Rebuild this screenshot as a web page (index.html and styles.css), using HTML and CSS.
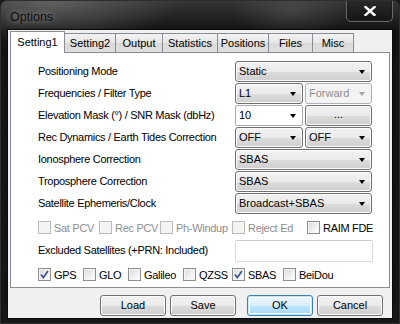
FILE: index.html
```html
<!DOCTYPE html>
<html lang="en">
<head>
  <meta charset="UTF-8" />
  <title>Options</title>
  <link rel="stylesheet" href="styles.css">
</head>
<body>
  <div class="window">
    <div class="titlebar">
      <span class="title">Options</span>
      <div class="close-btn">
        <svg width="12" height="10" viewBox="0 0 12 10"><path d="M1.5 1 L10.5 9 M10.5 1 L1.5 9" stroke="#fff" stroke-width="2.4" stroke-linecap="square"/></svg>
      </div>
    </div>
    <div class="client">
      <div class="tabs">
        <div class="tab active t-set1">Setting1</div>
        <div class="tab t-set2">Setting2</div>
        <div class="tab t-out">Output</div>
        <div class="tab t-stat">Statistics</div>
        <div class="tab t-pos">Positions</div>
        <div class="tab t-files">Files</div>
        <div class="tab t-misc">Misc</div>
      </div>
      <div class="panel">
        <div class="row">
          <span class="label">Positioning Mode</span>
          <div class="combo">Static<i class="arrow"></i></div>
        </div>
        <div class="row">
          <span class="label">Frequencies / Filter Type</span>
          <div class="pair">
            <div class="combo">L1<i class="arrow"></i></div>
            <div class="combo disabled">Forward<i class="arrow"></i></div>
          </div>
        </div>
        <div class="row">
          <span class="label">Elevation Mask (°) / SNR Mask (dbHz)</span>
          <div class="pair">
            <div class="combo edit">10<i class="arrow"></i></div>
            <div class="btn dots">...</div>
          </div>
        </div>
        <div class="row">
          <span class="label">Rec Dynamics / Earth Tides Correction</span>
          <div class="pair">
            <div class="combo">OFF<i class="arrow"></i></div>
            <div class="combo">OFF<i class="arrow"></i></div>
          </div>
        </div>
        <div class="row">
          <span class="label">Ionosphere Correction</span>
          <div class="combo">SBAS<i class="arrow"></i></div>
        </div>
        <div class="row">
          <span class="label">Troposphere Correction</span>
          <div class="combo">SBAS<i class="arrow"></i></div>
        </div>
        <div class="row">
          <span class="label">Satellite Ephemeris/Clock</span>
          <div class="combo">Broadcast+SBAS<i class="arrow"></i></div>
        </div>

        <div class="checks checks-opt">
          <label class="check disabled"><span class="box"></span>Sat PCV</label>
          <label class="check disabled"><span class="box"></span>Rec PCV</label>
          <label class="check disabled"><span class="box"></span>Ph-Windup</label>
          <label class="check disabled"><span class="box"></span>Reject Ed</label>
          <label class="check"><span class="box"></span>RAIM FDE</label>
        </div>

        <div class="row excl">
          <span class="label">Excluded Satellites (+PRN: Included)</span>
          <div class="textbox"></div>
        </div>

        <div class="checks checks-sys">
          <label class="check"><span class="box checked"><svg width="9" height="9" viewBox="0 0 9 9"><path d="M1 4.5 L3.3 7.5 L8 1" stroke="#3d5587" stroke-width="1.7" fill="none"/></svg></span>GPS</label>
          <label class="check"><span class="box"></span>GLO</label>
          <label class="check"><span class="box"></span>Galileo</label>
          <label class="check"><span class="box"></span>QZSS</label>
          <label class="check"><span class="box checked"><svg width="9" height="9" viewBox="0 0 9 9"><path d="M1 4.5 L3.3 7.5 L8 1" stroke="#3d5587" stroke-width="1.7" fill="none"/></svg></span>SBAS</label>
          <label class="check"><span class="box"></span>BeiDou</label>
        </div>
      </div>
      <div class="buttons">
        <div class="btn b-load">Load</div>
        <div class="btn b-save">Save</div>
        <div class="btn default b-ok">OK</div>
        <div class="btn b-cancel">Cancel</div>
      </div>
    </div>
  </div>
</body>
</html>
```

FILE: styles.css
```css
body {
  margin: 0;
  background: #1b1b1b;
  font-family: 'Liberation Sans', Arial, sans-serif;
  font-size: 11px;
  color: #000;
}
.window {
  width: 400px;
  height: 324px;
  box-sizing: border-box;
  border: 1px solid #2e2e2e;
  border-radius: 7px 7px 0 0;
  display: flex;
  flex-direction: column;
  overflow: hidden;
  background:
    radial-gradient(ellipse 130px 45px at 50px 0, rgba(125,125,125,0.6), transparent),
    radial-gradient(ellipse 60px 30px at 290px 10px, rgba(255,255,255,0.12), transparent),
    linear-gradient(#353535 0, #121212 30px, #161616 100%);
}
.titlebar {
  height: 29px;
  display: flex;
  align-items: center;
  padding-left: 9px;
  position: relative;
}
.title {
  font-size: 12.5px;
  color: #0d0d0d;
  text-shadow: 0 0 6px rgba(255,255,255,0.4), 0 0 12px rgba(255,255,255,0.25);
  margin-top: 3px;
}
.close-btn {
  position: absolute;
  right: 6px;
  top: -1px;
  width: 45px;
  height: 21px;
  border: 1px solid #6a6a6a;
  border-top: none;
  border-radius: 0 0 5px 5px;
  background: linear-gradient(#2a2a2a, #141414);
  box-shadow: inset 0 0 0 1px #1a1a1a;
  display: flex;
  align-items: center;
  justify-content: center;
}
.client {
  margin: 0 7px 5px;
  flex: 1;
  background: #f0f0f0;
  display: flex;
  flex-direction: column;
  padding: 1px 2px 0;
  box-shadow: 0 0 0 1px #0a0a0a;
}
.tabs {
  display: flex;
  align-items: flex-end;
  height: 22px;
  margin-bottom: -1px;
  position: relative;
  z-index: 1;
}
.tab {
  box-sizing: border-box;
  height: 19px;
  margin-bottom: 1px;
  border: 1px solid #898c95;
  border-bottom: none;
  border-left: none;
  background: linear-gradient(#f3f3f3, #e6e6e6 50%, #d9d9d9 51%, #e0e0e0);
  text-align: center;
  line-height: 18px;
}
.tab.active {
  height: 22px;
  margin-bottom: 0;
  background: #fff;
  border-left: 1px solid #898c95;
  line-height: 20px;
}
.t-set1 { width: 55px; }
.t-set2 { width: 51px; border-left: none; }
.t-out { width: 47px; }
.t-stat { width: 55px; }
.t-pos { width: 51px; }
.t-files { width: 44px; }
.t-misc { width: 41px; }
.panel {
  height: 236px;
  box-sizing: border-box;
  border: 1px solid #898c95;
  background: #fff;
  padding: 8px 0 0 27px;
}
.row {
  display: grid;
  grid-template-columns: 197px 137px;
  height: 22px;
  align-items: start;
}
.label, .check {
  letter-spacing: -0.3px;
}
.label {
  line-height: 21px;
  white-space: nowrap;
}
.pair {
  display: grid;
  grid-template-columns: 68px 67px;
  gap: 2px;
}
.combo, .btn {
  box-sizing: border-box;
  height: 21px;
  border: 1px solid #707070;
  border-radius: 3px;
  background: linear-gradient(#f2f2f2, #ebebeb 50%, #dddddd 51%, #cfcfcf);
  box-shadow: inset 0 0 0 1px #fbfbfb;
  line-height: 19px;
  white-space: nowrap;
}
.combo {
  position: relative;
  padding-left: 3px;
}
.arrow {
  position: absolute;
  right: 6px;
  top: 8px;
  border-left: 3.5px solid transparent;
  border-right: 3.5px solid transparent;
  border-top: 4px solid #000;
}
.combo.edit {
  background: #fff;
  border-color: #abadb3;
  border-radius: 2px;
  box-shadow: none;
}
.combo.disabled {
  color: #8d8d8d;
  background: #f4f4f4;
  border-color: #adb2b5;
  box-shadow: none;
}
.combo.disabled .arrow { border-top-color: #a5a5a5; }
.btn {
  text-align: center;
}
.dots { line-height: 17px; }
.checks {
  display: grid;
  margin-top: 5px;
  height: 15px;
  align-items: center;
}
.checks-opt { grid-template-columns: 61px 61px 72px 75px auto; }
.checks-sys { grid-template-columns: 45px 45px 55px 49px 51px auto; margin-top: 5px; }
.check {
  display: flex;
  align-items: center;
  gap: 3px;
  white-space: nowrap;
}
.box {
  box-sizing: border-box;
  width: 13px;
  height: 13px;
  flex: none;
  border: 1px solid #8e8f8f;
  background: linear-gradient(135deg, #d8d8d8, #f6f6f6 70%, #fff);
  box-shadow: inset 0 0 0 1px #f4f4f4;
  display: flex;
  align-items: center;
  justify-content: center;
}
.check.disabled { color: #8d8d8d; }
.check.disabled .box {
  border-color: #bcbcbc;
  background: #f4f4f4;
  box-shadow: none;
}
.excl { margin-top: 5px; }
.textbox {
  box-sizing: border-box;
  width: 138px;
  height: 22px;
  border: 1px solid #d9dde3;
  border-top-color: #c7ccd4;
  border-radius: 2px;
  background: #fff;
}
.buttons {
  display: flex;
  justify-content: flex-end;
  padding: 7px 7px 0 0;
}
.buttons .btn { width: 66px; }
.b-save { margin-left: 4px; }
.b-ok { margin-left: 11px; }
.b-cancel { margin-left: 4px; }
.btn.default {
  border-color: #3c7fb1;
  background: linear-gradient(#eaf6fd, #d9f0fc 50%, #bee6fd 51%, #a7d9f5);
  box-shadow: inset 0 0 0 1px #c8e6f8, inset 0 0 0 2px #fff;
}
```
